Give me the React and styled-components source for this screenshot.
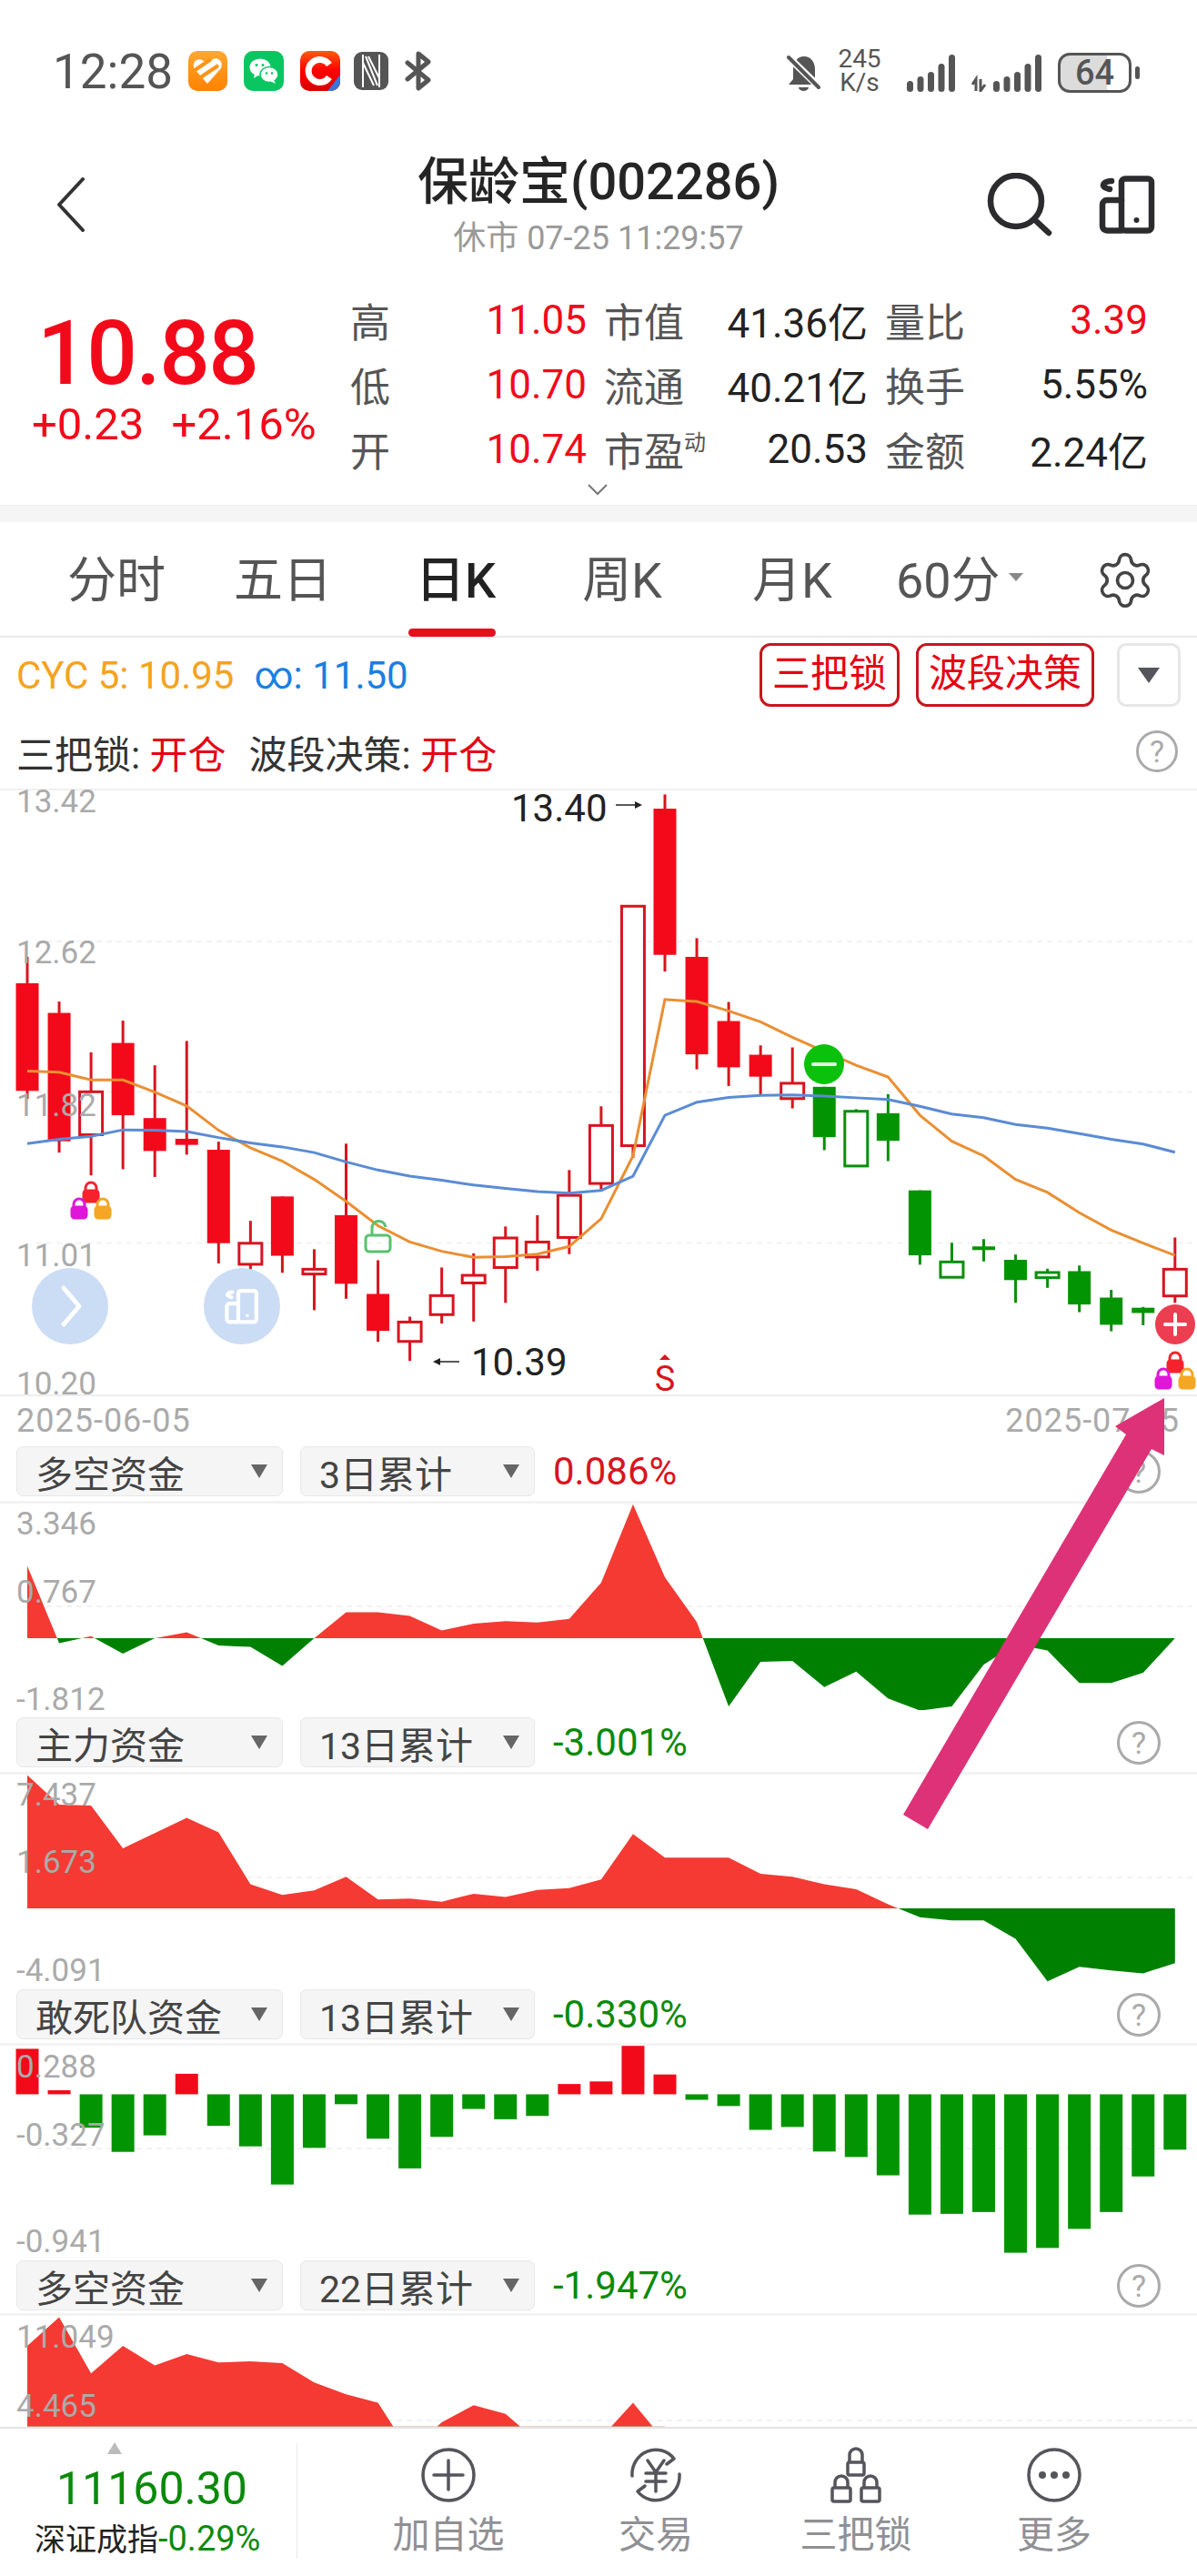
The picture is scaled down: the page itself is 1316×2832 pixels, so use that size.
import React from "react";
import styled, { createGlobalStyle } from "styled-components";
import { Settings } from "lucide-react";

const RED = "#f20a1a";
const UP = "#d8141f";
const GREEN = "#039403";
const AREA_RED = "#f43a33";
const AREA_GREEN = "#008000";

const stepX = (i) => 30 + 35.05 * i;

// [wick top, body top, body bottom, wick low, hollow], in 1/2.24 px from y=860
const candles = [
  [430, 495, 760, 780, 0], [540, 568, 884, 912, 0], [665, 760, 868, 968, 1],
  [587, 642, 820, 953, 0], [697, 827, 908, 972, 0], [637, 878, 893, 917, 0],
  [885, 905, 1135, 1185, 0], [1080, 1133, 1187, 1212, 1], [1020, 1020, 1166, 1208, 0],
  [1150, 1197, 1211, 1300, 1], [890, 1066, 1235, 1272, 0], [1177, 1260, 1351, 1378, 0],
  [1316, 1327, 1377, 1425, 1], [1195, 1262, 1311, 1333, 1], [1160, 1212, 1233, 1328, 1],
  [1094, 1120, 1195, 1282, 1], [1066, 1130, 1169, 1203, 1], [955, 1015, 1121, 1162, 1],
  [798, 843, 988, 1008, 1], [303, 303, 895, 925, 1], [30, 65, 425, 466, 0],
  [384, 430, 670, 707, 0], [541, 588, 702, 748, 0], [648, 671, 725, 770, 0],
  [653, 739, 779, 803, 1], [750, 750, 874, 906, 0], [805, 808, 945, 947, 1],
  [768, 815, 883, 933, 0], [1005, 1005, 1165, 1188, 0], [1134, 1179, 1219, 1220, 1],
  [1125, 1143, 1152, 1180, 0], [1163, 1176, 1226, 1282, 0], [1198, 1205, 1220, 1245, 1],
  [1190, 1204, 1286, 1305, 0], [1250, 1269, 1336, 1352, 0], [1292, 1294, 1307, 1337, 0],
  [1121, 1197, 1265, 1282, 1],
];
const isDown = (i) => i >= 25 && i <= 35;

const orange = [711, 714, 733, 733, 763, 797, 857, 900, 933, 978, 1032, 1092, 1132, 1155, 1170, 1168, 1162, 1143, 1075, 920, 535, 540, 563, 590, 628, 663, 697, 726, 820, 884, 920, 978, 1010, 1060, 1103, 1135, 1165];
const blue = [890, 879, 872, 856, 857, 860, 875, 888, 898, 912, 935, 955, 970, 980, 992, 1000, 1008, 1012, 1005, 970, 820, 788, 776, 771, 770, 773, 777, 781, 798, 817, 826, 843, 852, 865, 879, 891, 911];

const flow1 = [362, 552, 535, 578, 540, 525, 558, 561, 608, 540, 476, 476, 485, 521, 504, 498, 501, 492, 403, 210, 390, 500, 708, 598, 596, 660, 622, 688, 718, 708, 605, 555, 570, 650, 650, 625, 540];
const flow2 = [877, 950, 952, 1057, 1020, 982, 1018, 1146, 1172, 1161, 1127, 1183, 1181, 1189, 1169, 1177, 1160, 1155, 1134, 1022, 1080, 1080, 1080, 1120, 1127, 1146, 1158, 1195, 1227, 1235, 1235, 1280, 1385, 1349, 1358, 1365, 1340];
const bars = [130, 243, 345, 411, 366, 198, 340, 396, 500, 400, 281, 375, 456, 370, 294, 322, 313, 226, 219, 122, 200, 269, 286, 351, 343, 410, 425, 475, 582, 580, 575, 686, 673, 621, 575, 478, 405];
const flow4 = [940, 862, 1015, 940, 993, 962, 985, 982, 987, 1040, 1072, 1095, 1230, 1148, 1102, 1125, 1200, 1300, 1190, 1095, 1200];

const Global = createGlobalStyle`
  html, body { margin: 0; padding: 0; background: #fff; }
  body { font-family: Roboto, "Noto Sans CJK SC", sans-serif; color: #222; }
`;

const Page = styled.div`
  position: relative;
  width: 1316px;
  height: 2832px;
  overflow: hidden;
  background: #fff;
`;

const StatusBar = styled.div`
  height: 135px;
  padding: 56px 63px 0 58px;
  box-sizing: border-box;
  display: flex;
  align-items: flex-start;
  justify-content: space-between;
`;

const StatusLeft = styled.div`
  display: flex;
  align-items: flex-start;
`;

const Clock = styled.div`
  font-size: 53px;
  line-height: 46px;
  color: #555;
  width: 149px;
`;

const StatusIcons = styled.div`
  display: flex;
  align-items: center;
  gap: ${(p) => p.$gap}px;
`;

const Speed = styled.div`
  font-size: 28px;
  line-height: 26px;
  color: #555;
  text-align: center;
  width: 50px;
  margin: -4px 9px 0 0;
`;

const Battery = styled.div`
  position: relative;
  width: 81px;
  height: 44px;
  box-sizing: border-box;
  border: 3px solid #555;
  border-radius: 13px;
  overflow: hidden;
  font-size: 38px;
  font-weight: 500;
  line-height: 38px;
  text-align: center;
  color: #555;
  background: linear-gradient(90deg, #dcdcdc 68%, #fff 68%);
`;

const Nub = styled.div`
  width: 5px;
  height: 14px;
  margin-left: -14px;
  border-radius: 3px;
  background: #555;
`;

const Header = styled.div`
  height: 168px;
  padding-top: 12px;
  box-sizing: border-box;
  display: grid;
  grid-template-columns: 1fr auto 1fr;
  align-items: center;
`;

const TitleBox = styled.div`
  text-align: center;
`;

const Title = styled.div`
  font-size: 56px;
  line-height: 62px;
  font-weight: 500;
  color: #252525;
  margin-bottom: 11px;
`;

const SubTitle = styled.div`
  font-size: 36px;
  line-height: 40px;
  color: #999;
`;

const HeaderLeft = styled.div`
  padding-left: 62px;
  display: flex;
`;

const HeaderRight = styled.div`
  display: flex;
  justify-content: flex-end;
  align-items: center;
  gap: 51px;
  padding-right: 46px;
`;

const Quote = styled.div`
  position: relative;
  height: 252px;
  box-sizing: border-box;
  padding-top: 13px;
  display: flex;
`;

const PriceBox = styled.div`
  width: 385px;
  padding-left: 35px;
  box-sizing: border-box;
  color: ${RED};
`;

const Price = styled.div`
  font-size: 98px;
  line-height: 100px;
  font-weight: 500;
  letter-spacing: -1.5px;
  margin: 23px 0 0 6px;
`;

const Change = styled.div`
  font-size: 49px;
  line-height: 50px;
  margin-top: 3px;
  white-space: nowrap;
  word-spacing: 18px;
`;

const QuoteGrid = styled.div`
  display: grid;
  grid-template-columns: 260px 290px 289px;
  grid-auto-rows: 71px;
  column-gap: 19px;
`;

const Pair = styled.div`
  display: flex;
  justify-content: space-between;
  align-items: center;
  font-size: 44px;
`;

const PairLabel = styled.span`
  color: #555;
  white-space: nowrap;
  sup {
    font-size: 24px;
    line-height: 0;
    vertical-align: 18px;
  }
`;

const PairValue = styled.span`
  color: ${(p) => (p.$red ? RED : "#222")};
  white-space: nowrap;
`;

const MoreChevron = styled.svg`
  position: absolute;
  left: 645px;
  bottom: 10px;
`;

const Band = styled.div`
  height: 19px;
  background: #f5f5f5;
  border-top: 1px solid #eee;
  box-sizing: border-box;
`;

const Tabs = styled.div`
  height: 127px;
  box-sizing: border-box;
  padding-left: 74px;
  border-bottom: 2px solid #e8e8e8;
  display: flex;
  align-items: center;
  position: relative;
`;

const Tab = styled.div`
  position: relative;
  margin-left: ${(p) => p.$gap || 0}px;
  font-size: 54px;
  line-height: 132px;
  height: 127px;
  white-space: nowrap;
  font-weight: ${(p) => (p.$active ? 500 : 400)};
  color: ${(p) => (p.$active ? "#222" : "#555")};
  &::after {
    content: "";
    display: ${(p) => (p.$active ? "block" : "none")};
    position: absolute;
    left: -8px;
    right: 0;
    bottom: 0;
    height: 9px;
    border-radius: 5px;
    background: #e60f1c;
  }
`;

const TabCaret = styled.div`
  width: 0;
  height: 0;
  margin: 0 0 4px 9px;
  border-left: 8px solid transparent;
  border-right: 8px solid transparent;
  border-top: 9px solid #888;
`;

const GearSlot = styled.div`
  position: absolute;
  right: 45px;
  top: 30px;
  display: flex;
  color: #444;
`;

const Legend = styled.div`
  height: 168px;
  box-sizing: border-box;
  padding: 6px 18px 0;
  border-bottom: 2px solid #f0f0f0;
`;

const LegendRow = styled.div`
  display: flex;
  align-items: center;
  height: 70px;
  margin-bottom: 14px;
  font-size: 42px;
  white-space: nowrap;
`;

const Colored = styled.span`
  color: ${(p) => p.$color};
  margin-right: ${(p) => p.$gap || 0}px;
`;

const LockButton = styled.div`
  height: 70px;
  box-sizing: border-box;
  padding: 0 11px;
  margin-left: ${(p) => (p.$first ? "auto" : "18px")};
  border: 3px solid #c8161e;
  border-radius: 12px;
  color: #e60012;
  line-height: 62px;
`;

const DropButton = styled.div`
  width: 70px;
  height: 70px;
  box-sizing: border-box;
  margin-left: 25px;
  border: 3px solid #e6e6e6;
  border-radius: 10px;
  display: flex;
  align-items: center;
  justify-content: center;
  &::before {
    content: "";
    border-left: 12px solid transparent;
    border-right: 12px solid transparent;
    border-top: 17px solid #55555c;
  }
`;

const Help = styled.div`
  width: ${(p) => p.$size}px;
  height: ${(p) => p.$size}px;
  box-sizing: border-box;
  margin: ${(p) => p.$top || 0}px ${(p) => p.$right || 0}px 0 auto;
  border: 3px solid #aaa;
  border-radius: 50%;
  color: #aaa;
  font-size: 34px;
  line-height: ${(p) => p.$size - 6}px;
  text-align: center;
`;

const ChartSvg = styled.svg`
  display: block;
  width: 1316px;
  overflow: visible;
  font-family: Roboto, "Noto Sans CJK SC", sans-serif;
`;

const DateRow = styled.div`
  height: 49px;
  box-sizing: border-box;
  padding: 5px 19px 0 18px;
  border-top: 2px solid #eee;
  display: flex;
  justify-content: space-between;
  font-size: 36px;
  letter-spacing: 1px;
  line-height: 44px;
  color: #aaa;
`;

const PanelHeader = styled.div`
  height: ${(p) => p.$height}px;
  box-sizing: border-box;
  padding: 8px 40px 0 18px;
  border-bottom: 3px solid #f3f3f3;
  display: flex;
  align-items: flex-start;
`;

const Select = styled.div`
  width: ${(p) => p.$width}px;
  height: 55px;
  box-sizing: border-box;
  margin-right: ${(p) => p.$gap}px;
  padding: 0 16px 0 20px;
  background: #f5f5f5;
  border: 1px solid #e8e8e8;
  border-radius: 7px;
  display: flex;
  align-items: center;
  justify-content: space-between;
  font-size: 41px;
  color: #444;
  white-space: nowrap;
`;

const SelectCaret = styled.div`
  width: 0;
  height: 0;
  border-left: 9px solid transparent;
  border-right: 9px solid transparent;
  border-top: 15px solid #666;
`;

const PanelValue = styled.div`
  font-size: 42px;
  line-height: 55px;
  color: ${(p) => p.$color};
`;

const BottomBar = styled.div`
  height: 164px;
  box-sizing: border-box;
  border-top: 2px solid #e4e4e4;
  display: flex;
  align-items: flex-start;
`;

const IndexBox = styled.div`
  width: 327px;
  height: 127px;
  margin-top: 16px;
  box-sizing: border-box;
  padding-left: 38px;
  border-right: 1px solid #e8e8e8;
  position: relative;
`;

const IndexCaret = styled.div`
  position: absolute;
  left: 118px;
  top: -1px;
  width: 0;
  height: 0;
  border-left: 8px solid transparent;
  border-right: 8px solid transparent;
  border-bottom: 13px solid #bbb;
`;

const IndexValue = styled.div`
  margin: 24px 0 0 24px;
  font-size: 50px;
  line-height: 52px;
  color: #0a8a0a;
`;

const IndexName = styled.div`
  margin-top: 4px;
  font-size: 34px;
  line-height: 50px;
  white-space: nowrap;
  span {
    font-size: 38px;
    color: #0a8a0a;
  }
`;

const Nav = styled.div`
  margin-left: 52px;
  display: grid;
  grid-template-columns: 228px 228px 212px 224px;
`;

const NavItem = styled.div`
  display: flex;
  flex-direction: column;
  align-items: center;
  padding-top: 20px;
  font-size: 41px;
  line-height: 48px;
  color: #909094;
  white-space: nowrap;
  svg {
    margin-bottom: 11px;
  }
`;

const Overlay = styled.svg`
  position: absolute;
  left: 993px;
  top: 1537px;
  pointer-events: none;
`;

const Lock = ({ x, y, color, open }) => (
  <g fill="none" stroke={color} strokeWidth="3">
    <path d={open ? `M${x - 6} ${y + 9} v-7 a7.5 7.5 0 0 1 15 -2` : `M${x - 6} ${y + 9} v-3 a6 6 0 0 1 12 0 v3`} />
    {open ? (
      <rect x={x - 13} y={y + 9} width="27" height="18" rx="4" />
    ) : (
      <rect x={x - 8} y={y + 9} width="16" height="12" rx="3" fill={color} />
    )}
  </g>
);

const Locks = ({ x, y }) => (
  <g>
    <Lock x={x} y={y} color="#f5222d" />
    <Lock x={x - 13} y={y + 18} color="#e016d8" />
    <Lock x={x + 13} y={y + 18} color="#f5a623" />
  </g>
);

const Device = ({ color, width = 6.5 }) => (
  <g fill="none" stroke={color} strokeWidth={width} strokeLinecap="round" strokeLinejoin="round">
    <rect x="25" y="3.5" width="33" height="57" rx="4" />
    <path d="M25 27 H9 a5 5 0 0 0 -5 5 V55.5 a5 5 0 0 0 5 5 H25" />
    <path d="M14 6 C9 6 5 8 5 11 C5 13 8 14 12 15" />
    <circle cx="41.5" cy="49" r="3" fill={color} stroke="none" />
  </g>
);

const Candle = ({ i, c }) => {
  const [wt, bt, bb, wl, hollow] = c;
  const y = (v) => 860 + v / 2.24;
  const x = stepX(i);
  const stroke = isDown(i) ? "#0a8f0a" : UP;
  const fill = isDown(i) ? GREEN : RED;
  return (
    <g>
      <line x1={x} x2={x} y1={y(wt)} y2={y(wl)} stroke={stroke} strokeWidth="3" />
      {hollow ? (
        <rect x={x - 12.5} y={y(bt) + 1} width="25" height={y(bb) - y(bt) - 1} fill="#fff" stroke={stroke} strokeWidth="3" />
      ) : (
        <rect x={x - 12.5} y={y(bt)} width="25" height={y(bb) - y(bt)} fill={fill} />
      )}
    </g>
  );
};

const line = (vals) => vals.map((v, i) => `${stepX(i)},${860 + v / 2.24}`).join(" ");

const Axis = ({ labels }) =>
  labels.map(([text, y]) => (
    <text key={text} x="18" y={y} fill="#aaa" fontSize="35" dominantBaseline="central">
      {text}
    </text>
  ));

const KChart = () => (
  <ChartSvg height="664" viewBox="0 869 1316 664">
    {[1035, 1200.5, 1366.5].map((y) => (
      <line key={y} x1="40" x2="1316" y1={y} y2={y} stroke="#eee" strokeWidth="1.5" strokeDasharray="6 5" />
    ))}
    {candles.map((c, i) => (
      <Candle key={i} i={i} c={c} />
    ))}
    <polyline points={line(orange)} fill="none" stroke="#ea8f32" strokeWidth="3" />
    <polyline points={line(blue)} fill="none" stroke="#5a8bd6" strokeWidth="3" />
    <Axis
      labels={[
        ["13.42", 881],
        ["12.62", 1047],
        ["11.82", 1215],
        ["11.01", 1380],
        ["10.20", 1521],
      ]}
    />
    <text x="562" y="888" fontSize="42" fill="#222" dominantBaseline="central">13.40</text>
    <text x="518" y="1497" fontSize="42" fill="#222" dominantBaseline="central">10.39</text>
    <path d="M677 885 H700" stroke="#222" strokeWidth="1.5" />
    <path d="M698 881 L706 885 L698 889Z" fill="#222" />
    <path d="M483 1497 H505" stroke="#222" strokeWidth="1.5" />
    <path d="M484 1493 L476 1497 L484 1501Z" fill="#222" />
    <path d="M731 1489 L737 1495 H725Z" fill="#d8151d" />
    <text x="731" y="1516" fontSize="38" fill="#d8151d" textAnchor="middle" dominantBaseline="central">S</text>
    <Locks x={100} y={1300} />
    <Locks x={1292} y={1487} />
    <Lock x={415} y={1349} color="#58c26e" open />
    <circle cx="77" cy="1436" r="42" fill="#cbdcf5" />
    <path d="M70 1416 L87 1436 L70 1456" fill="none" stroke="#fff" strokeWidth="5" strokeLinecap="round" strokeLinejoin="round" />
    <circle cx="266" cy="1436" r="42" fill="#cbdcf5" />
    <g transform="translate(247 1417) scale(0.6)">
      <Device color="#fff" width="7" />
    </g>
    <circle cx="906" cy="1170" r="22" fill="#0cc10c" />
    <path d="M894 1170 H918" stroke="#e6f7e6" strokeWidth="4" strokeLinecap="round" />
    <circle cx="1292" cy="1456" r="22" fill="#ec3e50" />
    <path d="M1281 1456 H1303 M1292 1445 V1467" stroke="#fff" strokeWidth="4" strokeLinecap="round" />
  </ChartSvg>
);

const Area = ({ id, vals, zero, scale, base, top, height, dash, labels }) => {
  const pts = vals.map((v, i) => `${stepX(i)},${base + v / scale}`).join(" ");
  const zeroY = base + zero / scale;
  const poly = `${stepX(0)},${zeroY} ${pts} ${stepX(vals.length - 1)},${zeroY}`;
  return (
    <ChartSvg height={height} viewBox={`0 ${top} 1316 ${height}`}>
      <clipPath id={`${id}-up`}>
        <rect x="0" y={top} width="1316" height={zeroY - top} />
      </clipPath>
      <clipPath id={`${id}-down`}>
        <rect x="0" y={zeroY} width="1316" height={top + height - zeroY} />
      </clipPath>
      <line x1="40" x2="1316" y1={dash} y2={dash} stroke="#eee" strokeWidth="1.5" strokeDasharray="6 5" />
      <polygon points={poly} fill={AREA_RED} clipPath={`url(#${id}-up)`} />
      <polygon points={poly} fill={AREA_GREEN} clipPath={`url(#${id}-down)`} />
      <Axis labels={labels} />
    </ChartSvg>
  );
};

const BarChart = () => {
  const zero = 2200 + 254 / 2.48;
  return (
    <ChartSvg height="228" viewBox="0 2249 1316 228">
      <line x1="40" x2="1316" y1="2362" y2="2362" stroke="#eee" strokeWidth="1.5" strokeDasharray="6 5" />
      {bars.map((v, i) => {
        const y = 2200 + v / 2.48;
        return (
          <rect
            key={i}
            x={stepX(i) - 12.5}
            y={Math.min(y, zero)}
            width="25"
            height={Math.abs(y - zero)}
            fill={v < 254 ? RED : GREEN}
          />
        );
      })}
      <Axis
        labels={[
          ["0.288", 2272],
          ["-0.327", 2347],
          ["-0.941", 2464],
        ]}
      />
    </ChartSvg>
  );
};

const Panel = ({ title, period, value, color, height, children }) => (
  <>
    <PanelHeader $height={height}>
      <Select $width={293} $gap={19}>
        {title}
        <SelectCaret />
      </Select>
      <Select $width={258} $gap={20}>
        {period}
        <SelectCaret />
      </Select>
      <PanelValue $color={color}>{value}</PanelValue>
      <Help $size={48} $top={4}>?</Help>
    </PanelHeader>
    {children}
  </>
);

const AppIcons = () => (
  <StatusIcons $gap={18}>
    <svg width="43" height="44" viewBox="0 0 43 44">
      <defs>
        <linearGradient id="og" x1="0" y1="0" x2="0" y2="1">
          <stop offset="0" stopColor="#ffa733" />
          <stop offset="1" stopColor="#ff8200" />
        </linearGradient>
      </defs>
      <rect width="43" height="44" rx="10" fill="url(#og)" />
      <path d="M21 13 L27 9 C33 6 39 12 36 19 L21 36 L7 20 C3 14 9 7 15 10Z" fill="#fff" />
      <path d="M6 22 L25 9 M12 30 L33 16" stroke="#ff9416" strokeWidth="4" />
    </svg>
    <svg width="44" height="44" viewBox="0 0 44 44">
      <rect width="44" height="44" rx="10" fill="#0ac660" />
      <ellipse cx="18" cy="18" rx="11.5" ry="9.5" fill="#fff" />
      <path d="M12 24 L11 30 L17 26Z" fill="#fff" />
      <ellipse cx="28" cy="26" rx="10" ry="8.5" fill="#fff" stroke="#0ac660" strokeWidth="1.5" />
      <path d="M33 32 L35 36 L29 33Z" fill="#fff" />
      <circle cx="14" cy="15.5" r="1.5" fill="#0ac660" />
      <circle cx="21" cy="15.5" r="1.5" fill="#0ac660" />
      <circle cx="25" cy="24.5" r="1.3" fill="#0ac660" />
      <circle cx="31" cy="24.5" r="1.3" fill="#0ac660" />
    </svg>
    <svg width="44" height="44" viewBox="0 0 44 44">
      <defs>
        <linearGradient id="rg" x1="0" y1="0" x2="0" y2="1">
          <stop offset="0" stopColor="#ff5a10" />
          <stop offset="0.5" stopColor="#f00" />
          <stop offset="1" stopColor="#d80000" />
        </linearGradient>
      </defs>
      <rect width="44" height="44" rx="10" fill="url(#rg)" />
      <path d="M32 15 A12.5 12.5 0 1 0 32 29" fill="none" stroke="#fff" strokeWidth="7" />
      <path d="M44 26 V34 A10 10 0 0 1 34 44 H30Z" fill="#3576d8" />
    </svg>
    <svg width="38" height="42" viewBox="0 0 38 42" style={{ marginLeft: -3 }}>
      <rect width="38" height="42" rx="9" fill="#555" />
      <path d="M10 3 V39 M28 3 V39" stroke="#fff" strokeWidth="2" />
      <path d="M13 5 L26 37 M10 12 L22 37 M16 5 L28 29" stroke="#fff" strokeWidth="2" />
    </svg>
    <svg width="31" height="44" viewBox="0 0 31 44">
      <path d="M3 13 L26 32 L15 41 V3 L26 12 L3 31" fill="none" stroke="#555" strokeWidth="5" strokeLinejoin="round" strokeLinecap="round" />
    </svg>
  </StatusIcons>
);

const Bars = ({ arrows }) => {
  const xs = [3.5, 15, 26.5, 38, 49.5];
  const hs = [12, 17, 22, 31, 41];
  const dx = arrows ? 24 : 0;
  return (
    <svg width={53 + dx} height="42" viewBox={`0 0 ${53 + dx} 42`}>
      {arrows && <path d="M1 34 L5 28 V41 M10 28 V41 L15 34" fill="none" stroke="#555" strokeWidth="3" />}
      {xs.map((x, i) => (
        <rect key={x} x={x - 3.5 + dx} y={42 - hs[i]} width="7" height={hs[i]} rx="3.5" fill="#555" />
      ))}
    </svg>
  );
};

const StatusRight = () => (
  <StatusIcons $gap={18}>
    <svg width="37" height="42" viewBox="0 0 37 42">
      <path d="M19 3 C26 3 31 9 31 17 V28 L36 34 H2 L7 28 V17 C7 9 12 3 19 3Z" fill="#555" />
      <path d="M13 37 a5.5 4 0 0 0 11 0Z" fill="#555" />
      <path d="M1 3 L37 38" stroke="#fff" strokeWidth="8" />
      <path d="M2 4 L35 37" stroke="#555" strokeWidth="4" strokeLinecap="round" />
    </svg>
    <Speed>245<br />K/s</Speed>
    <Bars />
    <Bars arrows />
    <Battery>64</Battery>
    <Nub />
  </StatusIcons>
);

const Row = ({ label, value, red }) => (
  <Pair>
    <PairLabel>{label}</PairLabel>
    <PairValue $red={red}>{value}</PairValue>
  </Pair>
);

const navColor = "#55555c";

const App = () => (
  <Page>
    <Global />
    <StatusBar>
      <StatusLeft>
        <Clock>12:28</Clock>
        <AppIcons />
      </StatusLeft>
      <StatusRight />
    </StatusBar>

    <Header>
      <HeaderLeft>
        <svg width="32" height="60" viewBox="0 0 32 60">
          <path d="M29 2 L3 30 L29 58" fill="none" stroke="#333" strokeWidth="4" strokeLinecap="round" strokeLinejoin="round" />
        </svg>
      </HeaderLeft>
      <TitleBox>
        <Title>保龄宝(002286)</Title>
        <SubTitle>休市 07-25 11:29:57</SubTitle>
      </TitleBox>
      <HeaderRight>
        <svg width="72" height="70" viewBox="0 0 72 70">
          <circle cx="32" cy="31" r="28" fill="none" stroke="#2c2c2e" strokeWidth="6.5" />
          <path d="M52 51 L68 66" stroke="#2c2c2e" strokeWidth="6.5" strokeLinecap="round" />
        </svg>
        <svg width="62" height="64" viewBox="0 0 62 64">
          <Device color="#2c2c2e" />
        </svg>
      </HeaderRight>
    </Header>

    <Quote>
      <PriceBox>
        <Price>10.88</Price>
        <Change>+0.23 +2.16%</Change>
      </PriceBox>
      <QuoteGrid>
        <Row label="高" value="11.05" red />
        <Row label="市值" value="41.36亿" />
        <Row label="量比" value="3.39" red />
        <Row label="低" value="10.70" red />
        <Row label="流通" value="40.21亿" />
        <Row label="换手" value="5.55%" />
        <Row label="开" value="10.74" red />
        <Row label={<>市盈<sup>动</sup></>} value="20.53" />
        <Row label="金额" value="2.24亿" />
      </QuoteGrid>
      <MoreChevron width="24" height="14" viewBox="0 0 24 14">
        <path d="M2 2 L12 12 L22 2" fill="none" stroke="#777" strokeWidth="2" />
      </MoreChevron>
    </Quote>
    <Band />

    <Tabs>
      <Tab>分时</Tab>
      <Tab $gap={75}>五日</Tab>
      <Tab $gap={92} $active>日K</Tab>
      <Tab $gap={95}>周K</Tab>
      <Tab $gap={99}>月K</Tab>
      <Tab $gap={70}>60分</Tab>
      <TabCaret />
      <GearSlot>
        <Settings size={68} strokeWidth={1.3} />
      </GearSlot>
    </Tabs>

    <Legend>
      <LegendRow>
        <Colored $color="#f5a31f" $gap={22}>CYC 5: 10.95</Colored>
        <Colored $color="#1a7fe0">∞: 11.50</Colored>
        <LockButton $first>三把锁</LockButton>
        <LockButton>波段决策</LockButton>
        <DropButton />
      </LegendRow>
      <LegendRow>
        <Colored $color="#333">三把锁:&nbsp;</Colored>
        <Colored $color="#e60012" $gap={25}>开仓</Colored>
        <Colored $color="#333">波段决策:&nbsp;</Colored>
        <Colored $color="#e60012">开仓</Colored>
        <Help $size={46} $right={3}>?</Help>
      </LegendRow>
    </Legend>

    <KChart />
    <DateRow>
      <span>2025-06-05</span>
      <span>2025-07-25</span>
    </DateRow>

    <Panel title="多空资金" period="3日累计" value="0.086%" color="#d8141f" height={71}>
      <Area
        id="a1"
        vals={flow1}
        zero={540}
        scale={2.24}
        base={1560}
        top={1653}
        height={227}
        dash={1766}
        labels={[["3.346", 1675], ["0.767", 1750], ["-1.812", 1868]]}
      />
    </Panel>
    <Panel title="主力资金" period="13日累计" value="-3.001%" color="#0a8a0a" height={71}>
      <Area
        id="a2"
        vals={flow2}
        zero={1205}
        scale={2.24}
        base={1560}
        top={1951}
        height={228}
        dash={2064}
        labels={[["7.437", 1973], ["1.673", 2047], ["-4.091", 2166]]}
      />
    </Panel>
    <Panel title="敢死队资金" period="13日累计" value="-0.330%" color="#0a8a0a" height={70}>
      <BarChart />
    </Panel>
    <Panel title="多空资金" period="22日累计" value="-1.947%" color="#0a8a0a" height={69}>
      <Area
        id="a4"
        vals={flow4}
        zero={1160}
        scale={2.48}
        base={2200}
        top={2546}
        height={122}
        dash={2661}
        labels={[["11.049", 2569], ["4.465", 2645]]}
      />
    </Panel>

    <BottomBar>
      <IndexBox>
        <IndexCaret />
        <IndexValue>11160.30</IndexValue>
        <IndexName>深证成指<span>-0.29%</span></IndexName>
      </IndexBox>
      <Nav>
        <NavItem>
          <svg width="60" height="62" viewBox="0 0 60 62">
            <circle cx="30" cy="31" r="28" fill="none" stroke={navColor} strokeWidth="3.5" />
            <path d="M14 31 H46 M30 15 V47" stroke={navColor} strokeWidth="3.5" strokeLinecap="round" />
          </svg>
          加自选
        </NavItem>
        <NavItem>
          <svg width="60" height="62" viewBox="0 0 60 62">
            <path d="M4 32 A26 27 0 0 1 50 13 L42 19 M56 30 A26 27 0 0 1 10 49 L18 43" fill="none" stroke={navColor} strokeWidth="3.5" strokeLinecap="round" strokeLinejoin="round" />
            <path d="M21 15 L30 28 L39 15 M19 29 H41 M19 38 H41 M30 28 V49" fill="none" stroke={navColor} strokeWidth="3.5" strokeLinecap="round" />
          </svg>
          交易
        </NavItem>
        <NavItem>
          <svg width="60" height="62" viewBox="0 0 60 62" fill="none" stroke={navColor} strokeWidth="3.5">
            <path d="M23 18 V9 a7 7 0 0 1 14 0 V18" />
            <rect x="21" y="17" width="18" height="14" rx="2" />
            <path d="M7 46 V39 a7 7 0 0 1 14 0 V46" />
            <rect x="4" y="45" width="20" height="15" rx="2" />
            <path d="M39 46 V39 a7 7 0 0 1 14 0 V46" />
            <rect x="36" y="45" width="20" height="15" rx="2" />
          </svg>
          三把锁
        </NavItem>
        <NavItem>
          <svg width="60" height="62" viewBox="0 0 60 62">
            <circle cx="30" cy="31" r="28" fill="none" stroke={navColor} strokeWidth="3.5" />
            <circle cx="17" cy="31" r="4" fill={navColor} />
            <circle cx="30" cy="31" r="4" fill={navColor} />
            <circle cx="43" cy="31" r="4" fill={navColor} />
          </svg>
          更多
        </NavItem>
      </Nav>
    </BottomBar>

    <Overlay width="287" height="474" viewBox="993 1537 287 474">
      <polygon points="993,1995 1238,1577 1226,1568 1280,1537 1280,1600 1266,1593 1020,2011" fill="#dd3277" />
    </Overlay>
  </Page>
);

export default App;
